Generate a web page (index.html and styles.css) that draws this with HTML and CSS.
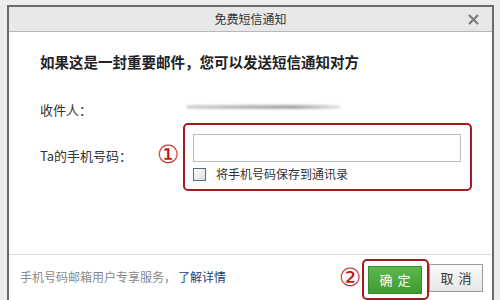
FILE: index.html
```html
<!DOCTYPE html>
<html>
<head>
<meta charset="utf-8">
<link rel="stylesheet" href="styles.css">
</head>
<body>
<div class="dialog">
  <div class="titlebar">
    <span class="title">免费短信通知</span>
    <svg class="close" width="11" height="11" viewBox="0 0 11 11"><path d="M1 1L10 10M10 1L1 10" stroke="#7a7a7a" stroke-width="2.2"/></svg>
  </div>
  <div class="content">
    <div class="heading">如果这是一封重要邮件，您可以发送短信通知对方</div>
    <div class="row recipient">
      <div class="label">收件人：</div>
      <div class="blur"></div>
    </div>
    <div class="row phone">
      <div class="label">Ta的手机号码：</div>
      <div class="redbox">
        <span class="mark mark1">①</span>
        <div class="input"></div>
        <label class="check"><span class="box"></span>将手机号码保存到通讯录</label>
      </div>
    </div>
  </div>
  <div class="footer">
    <div class="note">手机号码邮箱用户专享服务，<a class="link">了解详情</a></div>
    <div class="actions">
      <span class="mark mark2">②</span>
      <div class="btnbox"><div class="btn ok">确定</div></div>
      <div class="btn cancel">取消</div>
    </div>
  </div>
</div>
</body>
</html>
```
FILE: styles.css
```css
html, body {
  margin: 0;
  padding: 0;
  background: #ececec;
  width: 500px;
  height: 300px;
  overflow: hidden;
  font-family: "Noto Sans CJK SC", "Noto Sans", sans-serif;
}
.dialog {
  margin: 5px 0 0 7px;
  width: 483px;
  height: 293px;
  border: 2px solid #6a6a6a;
  border-bottom: 0;
  background: #fff;
  display: flex;
  flex-direction: column;
}
.titlebar {
  height: 24px;
  background: #e8e8e8;
  border-bottom: 1px solid #b8b8b8;
  display: flex;
  align-items: center;
  justify-content: center;
  position: relative;
}
.title {
  font-size: 12px;
  color: #333;
  line-height: 24px;
}
.close {
  position: absolute;
  right: 13px;
  top: 7px;
}
.content {
  flex: 1;
  padding: 20px 0 0 31px;
}
.heading {
  font-size: 14.5px;
  font-weight: bold;
  color: #222;
  line-height: 20px;
}
.row {
  display: flex;
  align-items: center;
}
.label {
  width: 143px;
  font-size: 13px;
  color: #333;
}
.recipient {
  margin-top: 26px;
  height: 22px;
}
.blur {
  width: 153px;
  height: 4px;
  margin: -5px 0 0 4px;
  background: linear-gradient(90deg, rgba(170,170,170,0.5), #b5b5b5 40%, #a8a8a8 70%, rgba(190,190,190,0.4));
  filter: blur(0.8px);
}
.phone {
  margin-top: 3px;
  align-items: flex-start;
}
.phone .label {
  margin-top: 23px;
}
.redbox {
  position: relative;
  width: 277px;
  height: 55px;
  border: 2px solid #a51c1c;
  border-radius: 5px;
  padding: 9px 0 0 8px;
}
.mark {
  position: absolute;
  color: #c21818;
  font-family: "DejaVu Serif", serif;
  font-size: 25px;
  line-height: 26px;
}
.mark1 {
  left: -28px;
  top: 17px;
}
.input {
  width: 266px;
  height: 26px;
  border: 1px solid #bdbdbd;
  background: #fff;
}
.check {
  display: flex;
  align-items: center;
  margin-top: 4px;
  font-size: 12px;
  color: #333;
  line-height: 16px;
}
.box {
  width: 11px;
  height: 11px;
  border: 1px solid #4d6c88;
  background: linear-gradient(135deg, #fff, #dcdcdc);
  margin-right: 10px;
}
.footer {
  height: 45px;
  border-top: 1px solid #dedede;
  display: flex;
  align-items: center;
  justify-content: space-between;
  padding: 0 9px 0 11px;
}
.note {
  font-size: 12px;
  color: #8a8a8a;
  margin-top: -3px;
}
.link {
  color: #1c3f7c;
  margin-left: 2px;
}
.actions {
  display: flex;
  align-items: center;
  position: relative;
}
.mark2 {
  position: static;
  margin-right: 1px;
}
.btnbox {
  border: 2px solid #a51c1c;
  border-radius: 5px;
  padding: 5px 5px 4px 4px;
  margin-top: 2px;
  margin-bottom: -2px;
}
.btn {
  width: 52px;
  height: 26px;
  font-size: 13px;
  line-height: 26px;
  text-align: center;
  letter-spacing: 5px;
  text-indent: 5px;
  box-sizing: content-box;
}
.ok {
  border: 1px solid #3b8a2c;
  background: linear-gradient(#5cb74c, #3f9b31);
  color: #fff;
}
.cancel {
  border: 1px solid #9c9c9c;
  background: linear-gradient(#fbfbfb, #e6e6e6);
  color: #333;
}
```
